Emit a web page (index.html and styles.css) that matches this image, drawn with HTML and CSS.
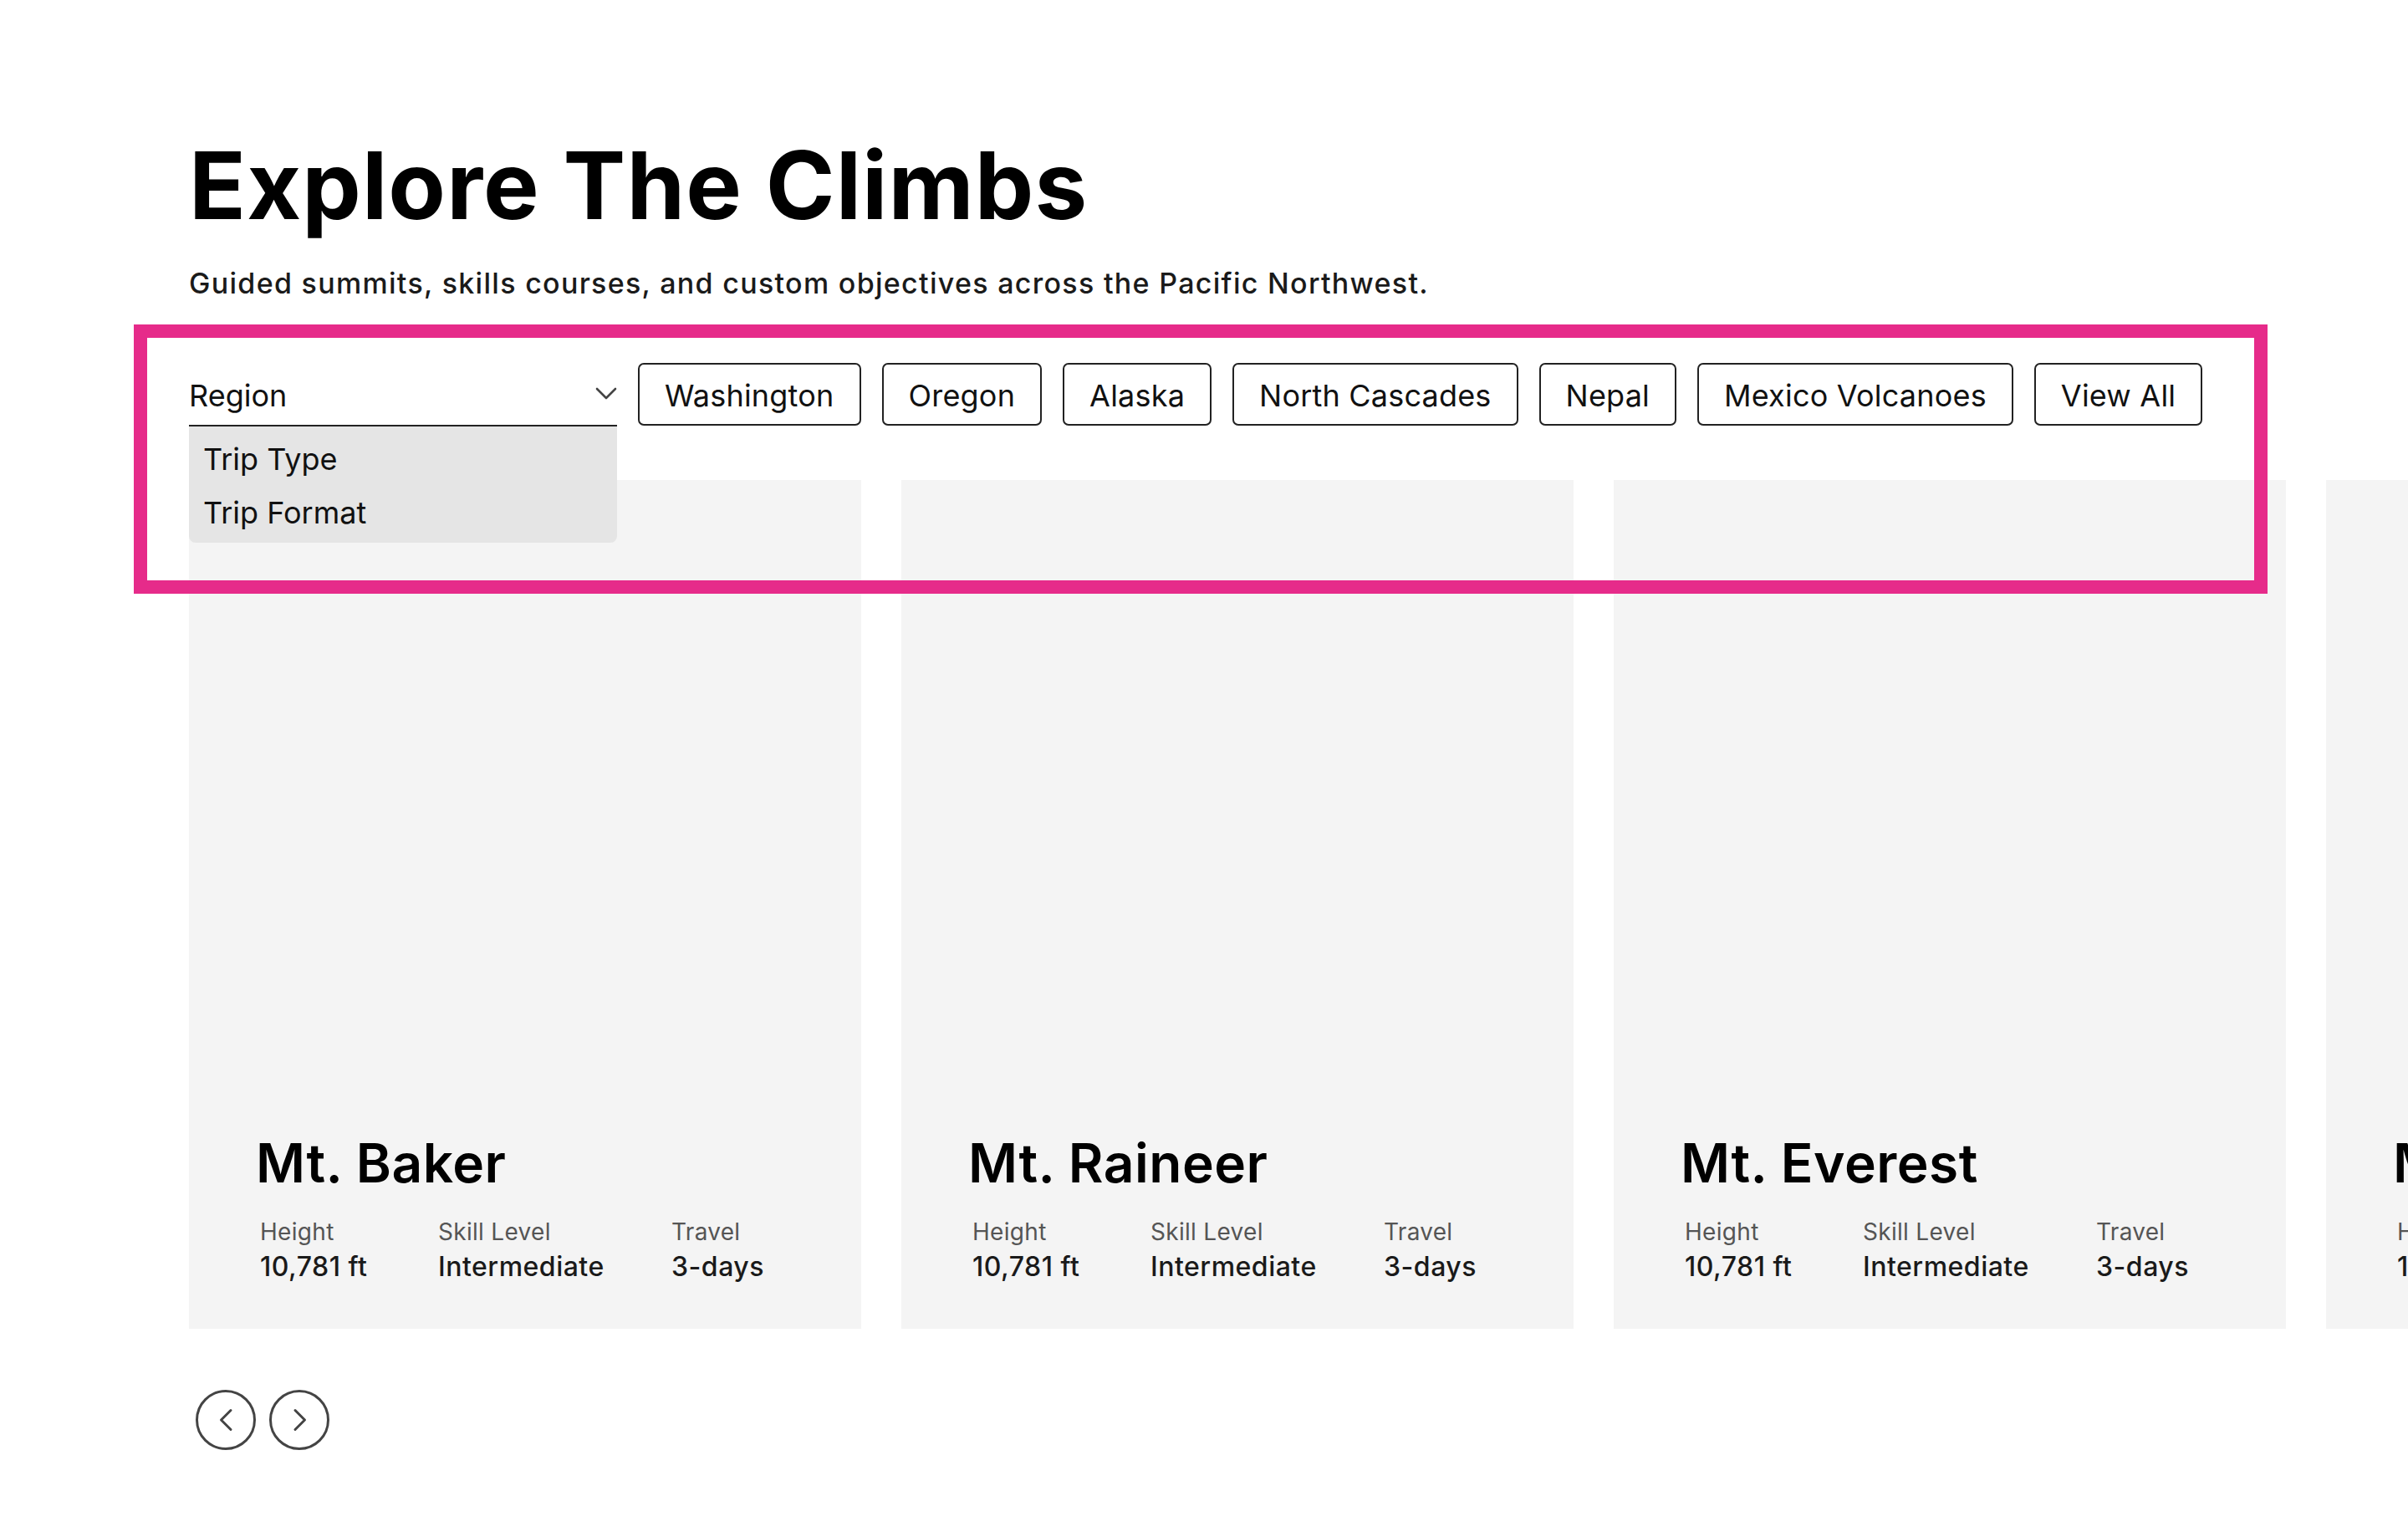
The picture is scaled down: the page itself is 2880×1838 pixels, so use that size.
FILE: index.html
```html
<!DOCTYPE html>
<html lang="en">
<head>
<meta charset="utf-8">
<title>Explore The Climbs</title>
<link rel="stylesheet" href="styles.css">
</head>
<body>
<main class="page">
  <header class="intro">
    <h1 class="title">Explore The Climbs</h1>
    <p class="subtitle">Guided summits, skills courses, and custom objectives across the Pacific Northwest.</p>
  </header>

  <section class="filters">
    <div class="select">
      <div class="select-field">
        <span>Region</span>
        <svg class="chev" width="26" height="16" viewBox="0 0 26 16"><path d="M2 2 L13 13 L24 2" fill="none" stroke="#444" stroke-width="2.6" stroke-linecap="round" stroke-linejoin="round"/></svg>
      </div>
      <ul class="menu">
        <li>Trip Type</li>
        <li>Trip Format</li>
      </ul>
    </div>
    <button class="chip">Washington</button>
    <button class="chip">Oregon</button>
    <button class="chip">Alaska</button>
    <button class="chip">North Cascades</button>
    <button class="chip">Nepal</button>
    <button class="chip">Mexico Volcanoes</button>
    <button class="chip">View All</button>
  </section>

  <section class="carousel">
    <div class="track">
      <article class="card">
        <h2 class="card-title">Mt. Baker</h2>
        <dl class="stats">
          <div class="stat"><dt>Height</dt><dd>10,781 ft</dd></div>
          <div class="stat"><dt>Skill Level</dt><dd>Intermediate</dd></div>
          <div class="stat"><dt>Travel</dt><dd>3-days</dd></div>
        </dl>
      </article>
      <article class="card">
        <h2 class="card-title">Mt. Raineer</h2>
        <dl class="stats">
          <div class="stat"><dt>Height</dt><dd>10,781 ft</dd></div>
          <div class="stat"><dt>Skill Level</dt><dd>Intermediate</dd></div>
          <div class="stat"><dt>Travel</dt><dd>3-days</dd></div>
        </dl>
      </article>
      <article class="card">
        <h2 class="card-title">Mt. Everest</h2>
        <dl class="stats">
          <div class="stat"><dt>Height</dt><dd>10,781 ft</dd></div>
          <div class="stat"><dt>Skill Level</dt><dd>Intermediate</dd></div>
          <div class="stat"><dt>Travel</dt><dd>3-days</dd></div>
        </dl>
      </article>
      <article class="card">
        <h2 class="card-title">Mt. Hood</h2>
        <dl class="stats">
          <div class="stat"><dt>Height</dt><dd>10,781 ft</dd></div>
          <div class="stat"><dt>Skill Level</dt><dd>Intermediate</dd></div>
          <div class="stat"><dt>Travel</dt><dd>3-days</dd></div>
        </dl>
      </article>
    </div>
  </section>

  <nav class="arrows">
    <button class="arrow" aria-label="Previous">
      <svg width="88" height="88" viewBox="0 0 88 88"><circle cx="44" cy="44" r="34.5" fill="none" stroke="#444" stroke-width="3"/><path d="M50 32.5 L38.5 44 L50 55.5" fill="none" stroke="#444" stroke-width="3" stroke-linecap="round" stroke-linejoin="round"/></svg>
    </button>
    <button class="arrow" aria-label="Next">
      <svg width="88" height="88" viewBox="0 0 88 88"><circle cx="44" cy="44" r="34.5" fill="none" stroke="#444" stroke-width="3"/><path d="M39 32.5 L50.5 44 L39 55.5" fill="none" stroke="#444" stroke-width="3" stroke-linecap="round" stroke-linejoin="round"/></svg>
    </button>
  </nav>

  <div class="highlight"></div>
</main>
</body>
</html>
```

FILE: styles.css
```css
* { box-sizing: border-box; }

html, body {
  margin: 0;
  padding: 0;
  background: #ffffff;
  overflow: hidden;
}

body {
  font-family: Inter, "Noto Sans", "Liberation Sans", sans-serif;
  color: #111;
}

.page {
  position: relative;
  width: 2880px;
  height: 1838px;
  padding-left: 226px;
}

.intro {
  padding-top: 165px;
}

.title {
  margin: 0;
  font-size: 112px;
  line-height: 1;
  font-weight: 700;
  color: #000;
  letter-spacing: 1.1px;
}

.subtitle {
  margin: 41px 0 0;
  font-size: 34px;
  line-height: 41px;
  font-weight: 500;
  color: #1a1a1a;
  letter-spacing: 1.3px;
}

.filters {
  margin-top: 75px;
  display: flex;
  align-items: flex-start;
  gap: 25px;
}

.select {
  position: relative;
  width: 512px;
  flex: 0 0 512px;
}

.select-field {
  height: 76px;
  display: flex;
  align-items: center;
  justify-content: space-between;
  padding-top: 3px;
  border-bottom: 2px solid #222;
  font-size: 36px;
  font-weight: 400;
  color: #111;
}

.chev {
  display: block;
  margin-top: -4px;
}

.menu {
  position: absolute;
  left: 0;
  top: 100%;
  width: 100%;
  margin: 0;
  padding: 7px 16px 4px 17px;
  list-style: none;
  background: #e5e5e5;
  border-radius: 0 0 8px 8px;
  z-index: 5;
}

.menu li {
  font-size: 36px;
  line-height: 64px;
  color: #111;
}

.chip {
  height: 75px;
  padding: 3px 30px 0;
  border: 2px solid #222;
  border-radius: 7px;
  background: #fff;
  font-family: inherit;
  font-size: 36px;
  font-weight: 400;
  color: #111;
  line-height: 1;
  white-space: nowrap;
  letter-spacing: 0.2px;
}

.carousel {
  margin-top: 64px;
  overflow: hidden;
}

.track {
  display: flex;
  gap: 48px;
}

.card {
  flex: 0 0 804px;
  height: 1015px;
  background: #f4f4f4;
  display: flex;
  flex-direction: column;
  justify-content: flex-end;
  padding: 0 40px 54px 80px;
}

.card-title {
  margin: 0;
  font-size: 64px;
  line-height: 76.8px;
  font-weight: 600;
  color: #000;
  letter-spacing: 0.5px;
}

.stats {
  margin: 26px 0 0;
  padding-left: 5px;
  display: grid;
  grid-template-columns: 213px 279px auto;
}

.stat dt {
  font-size: 28px;
  line-height: 35px;
  font-weight: 400;
  color: #555;
  letter-spacing: 0.3px;
}

.stat dd {
  margin: 4px 0 0;
  font-size: 32px;
  line-height: 40px;
  font-weight: 500;
  color: #1a1a1a;
  white-space: nowrap;
  letter-spacing: 0.5px;
}

.arrows {
  margin-top: 65px;
  display: flex;
}

.arrow {
  width: 88px;
  height: 88px;
  padding: 0;
  border: 0;
  background: transparent;
}

.arrow svg {
  display: block;
}

.highlight {
  position: absolute;
  left: 160px;
  top: 388px;
  width: 2552px;
  height: 322px;
  border: 16px solid #e62b8a;
  pointer-events: none;
  z-index: 10;
}
```
